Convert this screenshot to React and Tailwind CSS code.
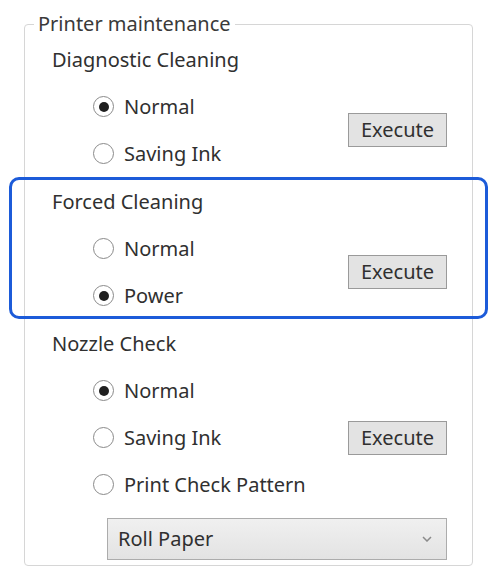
import React from "react";

const font = { fontFamily: '"Noto Sans", "Open Sans", Arial, sans-serif' };

function Radio({ checked, label }) {
  return (
    <div className="flex h-[47px] items-center pl-[41px]">
      <span className="flex h-[21px] w-[21px] items-center justify-center rounded-full border-[1.5px] border-[#8a8a8a] bg-white">
        {checked && <span className="h-[10px] w-[10px] rounded-full bg-[#1f1f1f]" />}
      </span>
      <span className="ml-[10px] text-[20px] leading-[28px] text-[#303030]">{label}</span>
    </div>
  );
}

function ExecButton() {
  return (
    <button className="flex h-[34px] w-[99px] items-center justify-center border border-[#9a9a9a] bg-[#e3e3e3] text-[20px] leading-[28px] text-[#303030]">
      Execute
    </button>
  );
}

function Section({ title, options, children }) {
  return (
    <div className="relative">
      {children}
      <div className="mb-[9px] h-[28px] text-[20px] leading-[28px] text-[#303030]">{title}</div>
      <div className="flex items-center justify-between">
        <div className="flex flex-col">
          {options.map((o) => (
            <Radio key={o.label} checked={o.checked} label={o.label} />
          ))}
        </div>
        <ExecButton />
      </div>
    </div>
  );
}

export default function App() {
  return (
    <div className="h-[574px] w-[492px] overflow-hidden bg-white pt-[8px]" style={font}>
      <fieldset className="ml-[24px] h-[558px] w-[449px] rounded-[4px] border border-[#d6d6d6] pb-[10px] pl-[27px] pr-[25px] pt-[6px]">
        <legend className="-ml-[18px] px-[4px] text-[20px] leading-[32px] text-[#3a3a3a]">Printer maintenance</legend>
        <div className="flex flex-col gap-[11px]">
          <Section
            title="Diagnostic Cleaning"
            options={[
              { label: "Normal", checked: true },
              { label: "Saving Ink", checked: false },
            ]}
          />
          <Section
            title="Forced Cleaning"
            options={[
              { label: "Normal", checked: false },
              { label: "Power", checked: true },
            ]}
          >
            <div className="pointer-events-none absolute -left-[43px] -right-[41px] -top-[11px] bottom-0 rounded-[10px] border-[3px] border-[#1c5bd9]" />
          </Section>
          <div>
            <Section
              title="Nozzle Check"
              options={[
                { label: "Normal", checked: true },
                { label: "Saving Ink", checked: false },
                { label: "Print Check Pattern", checked: false },
              ]}
            />
            <div className="ml-[55px] mt-[10px] flex h-[42px] items-center justify-between border border-[#acacac] bg-gradient-to-b from-[#f0f0f0] to-[#e3e3e3] pl-[10px] pr-[14px]">
              <span className="text-[20px] leading-[28px] text-[#303030]">Roll Paper</span>
              <svg width="10" height="6" viewBox="0 0 10 6" fill="none">
                <path d="M1 1l4 4 4-4" stroke="#8a8a8a" strokeWidth="1.5" />
              </svg>
            </div>
          </div>
        </div>
      </fieldset>
    </div>
  );
}
